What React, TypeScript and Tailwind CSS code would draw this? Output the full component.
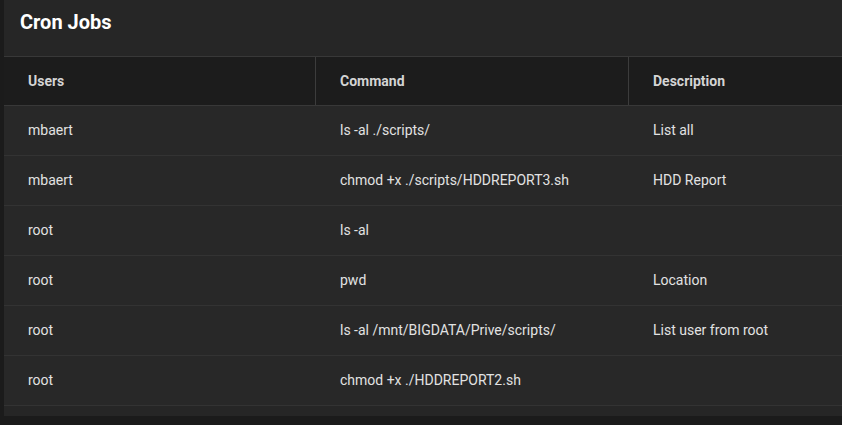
import React from 'react';

const jobs = [
  { user: 'mbaert', command: 'ls -al ./scripts/', description: 'List all' },
  { user: 'mbaert', command: 'chmod +x ./scripts/HDDREPORT3.sh', description: 'HDD Report' },
  { user: 'root', command: 'ls -al', description: '' },
  { user: 'root', command: 'pwd', description: 'Location' },
  { user: 'root', command: 'ls -al /mnt/BIGDATA/Prive/scripts/', description: 'List user from root' },
  { user: 'root', command: 'chmod +x ./HDDREPORT2.sh', description: '' },
];

const App: React.FC = () => {
  return (
    <div className="h-[425px] w-[842px] overflow-hidden bg-[#1b1b1b] pl-1 font-['Roboto',sans-serif]">
      <section className="h-[416px] bg-[#262626]">
        <div className="flex h-[57px] items-start border-b border-[#383838] px-4 pt-[9px]">
          <h1 className="text-[20px] font-bold leading-[26px] text-white">Cron Jobs</h1>
        </div>
        <div className="grid h-[49px] grid-cols-[312px_313px_1fr] border-b border-[#383838] bg-[#1c1c1c] text-[14px] font-bold text-[#d4d4d4]">
          <div className="flex items-center border-r border-[#3c3c3c] px-6">Users</div>
          <div className="flex items-center border-r border-[#3c3c3c] px-6">Command</div>
          <div className="flex items-center px-6">Description</div>
        </div>
        {jobs.map((job, i) => (
          <div
            key={i}
            className="grid h-[50px] grid-cols-[312px_313px_1fr] border-b border-[#333333] bg-[#282828] text-[14px] text-[#e2e2e2]"
          >
            <div className="flex items-center px-6">{job.user}</div>
            <div className="flex items-center px-6">{job.command}</div>
            <div className="flex items-center px-6">{job.description}</div>
          </div>
        ))}
      </section>
    </div>
  );
};

export default App;
